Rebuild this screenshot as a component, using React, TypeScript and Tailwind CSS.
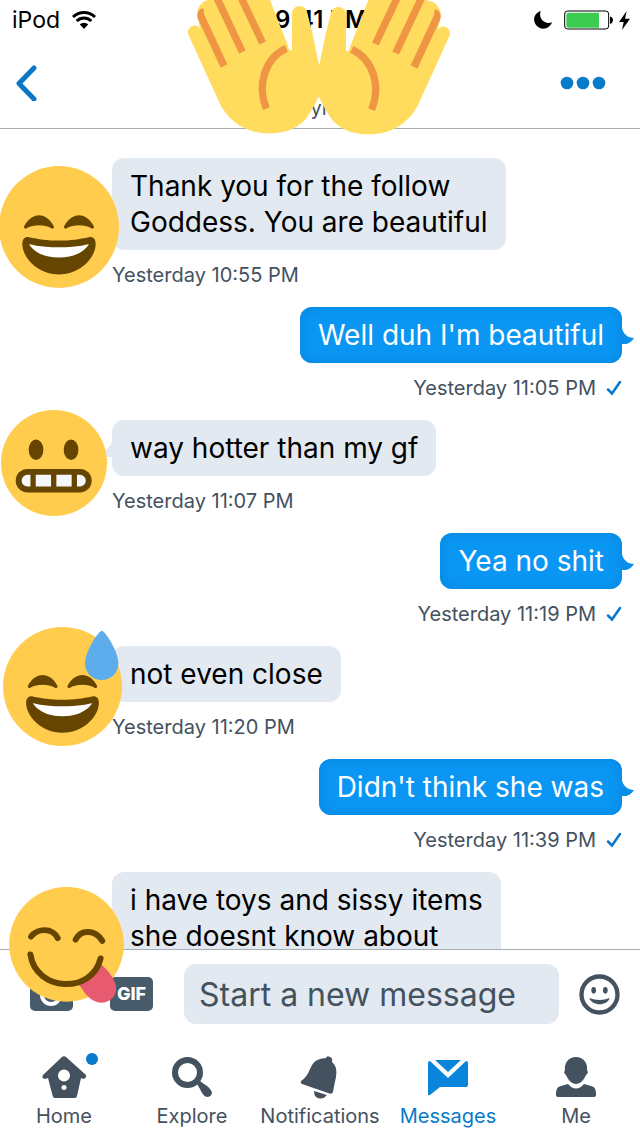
import type { ReactNode } from "react";

type Message = { text: string; time: string; mine?: boolean };

const messages: Message[] = [
  { text: "Thank you for the follow\nGoddess. You are beautiful", time: "Yesterday 10:55 PM" },
  { text: "Well duh I'm beautiful", time: "Yesterday 11:05 PM", mine: true },
  { text: "way hotter than my gf", time: "Yesterday 11:07 PM" },
  { text: "Yea no shit", time: "Yesterday 11:19 PM", mine: true },
  { text: "not even close", time: "Yesterday 11:20 PM" },
  { text: "Didn't think she was", time: "Yesterday 11:39 PM", mine: true },
  { text: "i have toys and sissy items\nshe doesnt know about", time: "" },
];

function Hand() {
  return (
    <>
      <path
        fill="#FFDC5D"
        d="M24 101C21 80 49 67 60 86L52 45C50 20 70-2 91 0L100-20H262L270 0L325 140Q327 154 336 151V42C336 10 379 10 382 40L397 98L418 200V286C409 308 394 332 382 350C360 382 320 400 267 400C204 400 150 370 120 312Z"
      />
      <g fill="none" stroke="#EF9645" strokeWidth="22">
        <path d="M109-10L187 156M182-10L248 129" />
        <path d="M319 145C252 176 231 258 259 326" />
      </g>
      <path fill="#EF9645" d="M70 24C54 28 48 43 54 57L122 203L142 193L72 42Z" />
    </>
  );
}

function OpenHands() {
  return (
    <svg viewBox="0 0 840 450" className="pointer-events-none absolute top-0 left-1/2 z-10 h-[150px] w-[280px] -translate-x-1/2" aria-hidden="true">
      <Hand />
      <g transform="translate(834 3) scale(-1 1)">
        <Hand />
      </g>
    </svg>
  );
}

function Grin({ sweat }: { sweat?: boolean }) {
  return (
    <svg viewBox="0 0 36 36" preserveAspectRatio="none" className="size-full" aria-hidden="true">
      <circle cx="18" cy="18" r="18" fill="#FFCC4D" />
      <path
        fill="#664500"
        d="M28.457 17.797c-.06-.135-1.499-3.297-4.457-3.297-2.957 0-4.397 3.162-4.457 3.297-.092.207-.032.449.145.591.175.142.426.147.61.014.012-.009 1.262-.902 3.702-.902 2.426 0 3.674.881 3.702.901.088.066.194.099.298.099.11 0 .221-.037.312-.109.177-.142.238-.386.145-.594zm-12 0c-.06-.135-1.499-3.297-4.457-3.297-2.957 0-4.397 3.162-4.457 3.297-.092.207-.032.449.144.591.176.142.427.147.61.014.013-.009 1.262-.902 3.703-.902 2.426 0 3.674.881 3.702.901.09.066.195.099.298.099.11 0 .221-.037.312-.109.178-.142.237-.386.145-.594zM18 22c-3.623 0-6.027-.422-9-1-.679-.131-2 0-2 2 0 4 4.595 9 11 9 6.404 0 11-5 11-9 0-2-1.321-2.132-2-2-2.973.578-5.377 1-9 1z"
      />
      <path fill="#fff" d="M9 23s3 1 9 1 9-1 9-1-2 4-9 4-9-4-9-4z" />
      {sweat && <path fill="#5DADEC" d="M29.9 1.1C30.9 1.1 34.9 7.4 34.9 11A5.05 5.05 0 0 1 24.8 11C24.8 7.4 28.9 1.1 29.9 1.1Z" />}
    </svg>
  );
}

function Grimace() {
  return (
    <svg viewBox="0 0 36 36" className="size-full" aria-hidden="true">
      <circle cx="18" cy="18" r="18" fill="#FFCC4D" />
      <g fill="#664500">
        <ellipse cx="11.9" cy="13.5" rx="2.5" ry="3.5" />
        <ellipse cx="23.8" cy="13.5" rx="2.5" ry="3.5" />
        <rect x="5" y="20" width="25.8" height="8" rx="4" />
      </g>
      <path fill="#F5F8FA" d="M10 22H9a2 2 0 0 0 0 4h1zM11.8 22H17v4h-5.2zM18.8 22H24v4h-5.2zM25.8 22h1a2 2 0 0 1 0 4h-1z" />
    </svg>
  );
}

function Yum() {
  return (
    <svg viewBox="28 82 345 349" className="size-full" aria-hidden="true">
      <circle cx="200.500" cy="254.500" r="172.500" fill="#FFCC4D" />
      <path fill="#E75A70" d="M236 374L307 317C326 334 338 351 346 369C359 398 339 429 306 430C267 428 256 398 236 374Z" />
      <g fill="none" stroke="#664500" strokeWidth="18" strokeLinecap="round">
        <path d="M94 231C112 207 157 202 174 236M228 240C243 209 288 209 308 244" />
        <path d="M92 285C108 396 276 407 303 297" />
      </g>
    </svg>
  );
}

function Tail({ mine }: { mine?: boolean }) {
  return (
    <svg
      viewBox="0 0 12 16"
      className={mine ? "absolute bottom-[19px] left-full h-4 w-3 text-[#0a8fe8]" : "absolute right-full bottom-[19px] h-4 w-3 -scale-x-100 text-[#e3e9f0]"}
      aria-hidden="true"
    >
      <path fill="currentColor" d="M0 0C1 6 6 10 12 10C9 15 4 17 0 16Z" />
    </svg>
  );
}

function Bubble({ text, time, mine }: Message) {
  return (
    <li className={mine ? "flex flex-col items-end" : "flex flex-col items-start"}>
      <div
        className={
          mine
            ? "relative rounded-xl bg-[#0a96f2] px-[18px] py-[10px] text-white shadow-[inset_0_0_12px_#0786df]"
            : "relative rounded-xl bg-[#e3e9f0] px-[18px] py-[10px] text-black"
        }
      >
        <Tail mine={mine} />
        <p className="text-[28px] leading-9 whitespace-pre-line">{text}</p>
      </div>
      <div className="flex h-[57px] items-start gap-[10px] pt-3 text-[20px] leading-[26px] text-[#44515e]">
        <time>{time}</time>
        {mine && (
          <svg viewBox="0 0 16 16" className="mt-[5px] size-4" role="img" aria-label="Delivered">
            <path d="M2 9.500L6 13.500L14 2" fill="none" stroke="#0878ca" strokeWidth="2.500" strokeLinecap="round" />
          </svg>
        )}
      </div>
    </li>
  );
}

function TabLink({ label, active, children }: { label: string; active?: boolean; children: ReactNode }) {
  return (
    <a href="#" className={active ? "flex flex-1 flex-col items-center text-[#087acb]" : "flex flex-1 flex-col items-center text-[#44515e]"}>
      <svg viewBox="0 0 48 48" className="size-12 overflow-visible" fill="currentColor" aria-hidden="true">
        {children}
      </svg>
      <span className="text-[20px] leading-[30px]">{label}</span>
    </a>
  );
}

export default function App() {
  return (
    <div className="relative flex h-screen flex-col overflow-hidden bg-white font-['Inter','Liberation_Sans',sans-serif]">
      <header className="relative shrink-0 border-b border-[#a5adb5]">
        <div className="flex h-10 items-center justify-between pr-[10px] pl-3 text-[23px] leading-7 text-black">
          <div className="flex flex-1 items-center gap-3">
            <span>iPod</span>
            <svg viewBox="0 0 72 54" className="h-[18px] w-6" aria-label="Wi-Fi">
              <g fill="none" stroke="#000" strokeWidth="9">
                <path d="M3 18C22 0 50 0 69 18M14 30C27 18 45 18 58 30" />
              </g>
              <path d="M23 40Q36 30 49 40L36 54Z" />
            </svg>
          </div>
          <span className="text-[24px] font-semibold">9:41 PM</span>
          <div className="flex flex-1 items-center justify-end">
            <svg viewBox="0 0 54 54" className="mr-3 h-[18px] w-[18px]" aria-label="Do not disturb">
              <path d="M20 0C13 20 28 42 54 34C45 60 8 60 1 31C-2 17 6 5 20 0Z" />
            </svg>
            <svg viewBox="0 0 147 60" className="mr-[6px] h-5 w-[49px]" aria-label="Battery">
              <rect x="2" y="3" width="132" height="54" rx="9" fill="#fff" stroke="#000" strokeWidth="3" />
              <path d="M13 8H105V53H13Q7 53 7 47V14Q7 8 13 8Z" fill="#3bcc51" />
              <path d="M138 20H141Q147 23 147 30Q147 38 141 41H138Z" />
            </svg>
            <svg viewBox="0 0 33 57" className="h-[19px] w-[11px]" aria-label="Charging">
              <path d="M23 0L0 33H14L9 57L33 23H18Z" />
            </svg>
          </div>
        </div>
        <div className="flex h-[88px] items-start justify-between px-4 pt-6">
          <button type="button" aria-label="Back" className="flex h-[38px] w-16 items-center">
            <svg viewBox="0 0 22 36" className="h-9 w-[22px]" fill="none" stroke="#0b78c5" strokeWidth="5" strokeLinecap="round" strokeLinejoin="round">
              <path d="M18 3L3 18.500L18 34" />
            </svg>
          </button>
          <span className="self-end pb-[8px] text-[20px] leading-6 text-[#44515e]">yr</span>
          <button type="button" aria-label="More" className="flex h-[38px] w-16 items-center justify-end pr-[18px]">
            <svg viewBox="0 0 46 14" className="h-[14px] w-[46px] shrink-0" fill="#087acb">
              <circle cx="7" cy="7" r="6.300" />
              <circle cx="23" cy="7" r="6.300" />
              <circle cx="39" cy="7" r="6.300" />
            </svg>
          </button>
        </div>
        <OpenHands />
      </header>

      <main className="relative min-h-0 flex-1 overflow-hidden">
        <ul className="pt-[29px] pr-[18px] pl-28">
          {messages.map((message) => (
            <Bubble key={message.text} {...message} />
          ))}
        </ul>
        <div className="absolute top-[37px] left-[-1px] h-[122px] w-[120px]">
          <Grin />
        </div>
        <div className="absolute top-[281px] left-px size-[106px]">
          <Grimace />
        </div>
        <div className="absolute top-[498px] left-[3px] size-[119px]">
          <Grin sweat />
        </div>
      </main>

      <footer className="relative shrink-0">
        <form className="flex items-center border-t border-[#a5adb5] pt-[14px] pr-5 pl-[30px]">
          <button type="button" aria-label="Add photo" className="mr-[37px]">
            <svg viewBox="0 0 43 34" className="h-[34px] w-[43px]">
              <rect width="43" height="34" rx="5" fill="#485b6b" />
              <circle cx="21" cy="18" r="9" fill="none" stroke="#fff" strokeWidth="4" />
            </svg>
          </button>
          <button type="button" className="mr-[31px] h-[34px] w-[43px] rounded-[5px] bg-[#485b6b] text-center text-[18px] leading-[34px] font-extrabold text-white">
            GIF
          </button>
          <input
            type="text"
            aria-label="Start a new message"
            placeholder="Start a new message"
            className="h-[60px] min-w-0 flex-1 rounded-xl bg-[#e3e9f0] px-[15px] text-[32px] text-[#44515e] outline-none placeholder:text-[#44515e]"
          />
          <button type="button" aria-label="Emoji" className="ml-5">
            <svg viewBox="0 0 123 123" className="size-[41px]" fill="#44515e">
              <circle cx="61.500" cy="61.500" r="54" fill="none" stroke="#44515e" strokeWidth="13" />
              <ellipse cx="44" cy="49" rx="7" ry="10" />
              <ellipse cx="79" cy="49" rx="7" ry="10" />
              <path d="M31 72Q62 84 92 72C85 97 39 97 31 72Z" />
            </svg>
          </button>
        </form>
        <nav className="flex h-28 items-start pt-[29px]">
          <TabLink label="Home">
            <path d="M24 3.500Q25 3 26 4L46 22Q47 25 43 26L41 25L37 43Q36.500 45 35 45H15Q13 45 12.700 43L8 25L5 26Q1 25 3 22L22 4Q23 3 24 3.500ZM24 16.500a6 6 0 1 0 0 12a6 6 0 1 0 0-12ZM24 32a2.500 2.500 0 1 0 0 5a2.500 2.500 0 1 0 0-5Z" fillRule="evenodd" />
            <circle cx="52" cy="6" r="6" fill="#087acb" />
          </TabLink>
          <TabLink label="Explore">
            <circle cx="19.500" cy="19.500" r="12.500" fill="none" stroke="currentColor" strokeWidth="6" />
            <path d="M29 31L32 28L36 31Q43 35 44 40Q43 44 39 44Q35 43 32 36Z" />
          </TabLink>
          <TabLink label="Notifications">
            <path d="M5 28Q11 24 14 16Q18 5 30 5Q31 2 34 4Q37 5 36 9Q42 14 40 24Q38 33 37 39Q36 42 32 40L6 31Q4 30 5 28ZM18 38L31 42Q26 48 20 44Q18 42 18 38Z" />
          </TabLink>
          <TabLink label="Messages" active>
            <path fill="#0986dc" d="M11 7H37L24 19ZM4 10Q4 8 6 8L24 25L42 8Q44 8 44 10V32Q44 34 42 34H16L6 42Q4 43 4 41Z" />
          </TabLink>
          <TabLink label="Me">
            <path d="M24 4C16 4 12 11 13 17Q11 20 14 22C16 27 20 31 24 31C28 31 32 27 34 22Q37 20 35 17C36 11 32 4 24 4ZM16 31Q24 40 32 31L39 33Q44 34 44 40V42Q44 44 41 44H7Q4 44 4 42V40Q4 34 9 33Z" />
          </TabLink>
        </nav>
        <div className="pointer-events-none absolute top-[-62px] left-[9px] h-[116px] w-[115px]">
          <Yum />
        </div>
      </footer>
    </div>
  );
}
